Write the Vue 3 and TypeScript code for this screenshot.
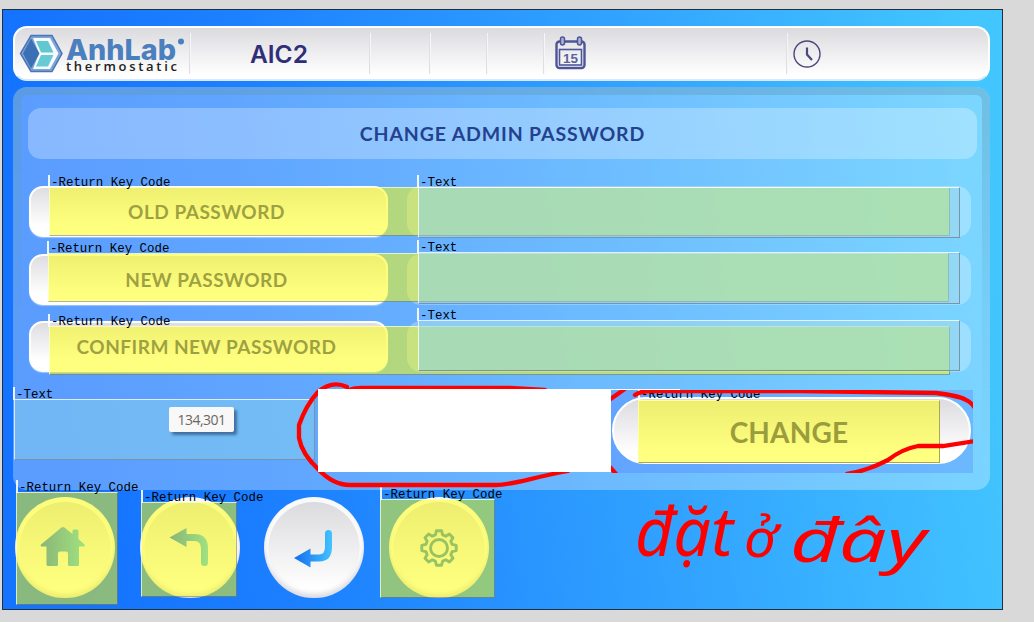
<script setup lang="ts">
interface Region {
  kind: 'key' | 'text'
  x: number
  y: number
  w: number
  h: number
  label: string
  lx: number
  ly: number
}

const rows: string[] = ['OLD PASSWORD', 'NEW PASSWORD', 'CONFIRM NEW PASSWORD']
const dividers: number[] = [189, 369, 429, 486, 543, 786]

const regions: Region[] = [
  { kind: 'key', x: 49, y: 187, w: 901, h: 49, label: 'Return Key Code', lx: 48, ly: 175 },
  { kind: 'key', x: 48, y: 253, w: 901, h: 49, label: 'Return Key Code', lx: 47, ly: 241 },
  { kind: 'key', x: 49, y: 326, w: 901, h: 49, label: 'Return Key Code', lx: 48, ly: 314 },
  { kind: 'text', x: 418, y: 187, w: 542, h: 51, label: 'Text', lx: 417, ly: 175 },
  { kind: 'text', x: 418, y: 252, w: 542, h: 52, label: 'Text', lx: 417, ly: 240 },
  { kind: 'text', x: 418, y: 320, w: 542, h: 51, label: 'Text', lx: 417, ly: 308 },
  { kind: 'text', x: 14, y: 399, w: 301, h: 61, label: 'Text', lx: 13, ly: 387 },
  { kind: 'key', x: 16, y: 492, w: 102, h: 113, label: 'Return Key Code', lx: 16, ly: 480 },
  { kind: 'key', x: 141, y: 502, w: 96, h: 95, label: 'Return Key Code', lx: 141, ly: 490 },
  { kind: 'key', x: 380, y: 499, w: 115, h: 99, label: 'Return Key Code', lx: 380, ly: 487 },
]

const px = (n: number): string => `${n}px`

const gear: string = (() => {
  const teeth = 8
  const pts: string[] = []
  for (let i = 0; i < teeth; i++) {
    const a = (i * 2 * Math.PI) / teeth - Math.PI / 2
    const steps: [number, number][] = [[-0.27, 13.6], [-0.15, 17.4], [0.15, 17.4], [0.27, 13.6]]
    for (const [da, r] of steps) {
      pts.push(`${(Math.cos(a + da) * r).toFixed(2)},${(Math.sin(a + da) * r).toFixed(2)}`)
    }
  }
  return pts.join(' ')
})()
</script>

<template>
  <div class="stage">
    <main class="screen">
      <header class="topbar">
        <svg class="brand" width="170" height="51" viewBox="15 28 170 51">
          <path d="M31 35.500h21l10 18-10 18h-21l-10.500-18z" fill="#7fa3d6" stroke="#4a75b5" stroke-width="1.500" />
          <path d="M33 38h17l8.500 15.500-8.500 15.500h-17l6-15.500z" fill="#f6fbff" />
          <path d="M31 38.500l8.500 15-8.500 15-8-15z" fill="#3c70b4" />
          <path d="M36 41h12l5.500 11.500h-12.500z" fill="#62c8cf" />
          <path d="M41 55h12.500l-5.500 11.500h-12z" fill="#66cbd4" />
          <text class="brand-name" x="66" y="60" textLength="110" lengthAdjust="spacingAndGlyphs">AnhLab</text>
          <circle cx="181" cy="41.500" r="3" fill="#4b80bf" />
          <text class="brand-sub" x="66" y="71" textLength="111">thermostatic</text>
        </svg>
        <span class="model">AIC2</span>
        <i v-for="d in dividers" :key="d" class="divider" :style="{ left: px(d - 15) }" />
        <svg class="calendar" width="34" height="36" viewBox="0 0 34 36" fill="none" stroke="#4d5596">
          <rect x="2.500" y="6.500" width="28" height="26.500" rx="3" stroke-width="2.400" />
          <rect x="5.500" y="14.500" width="22" height="15.500" stroke-width="1.600" />
          <rect x="6.500" y="2" width="4" height="8" rx="2" fill="#aeb3d2" stroke-width="1.500" />
          <rect x="23.500" y="2" width="4" height="8" rx="2" fill="#aeb3d2" stroke-width="1.500" />
          <text class="day" x="9" y="27.500" textLength="15" lengthAdjust="spacingAndGlyphs">15</text>
        </svg>
        <svg class="clock" width="30" height="30" viewBox="0 0 30 30" fill="none" stroke="#4b477f">
          <circle cx="15" cy="15" r="13" stroke-width="1.400" />
          <path d="M15 8.500v7l5 5.500" stroke-width="2.200" />
        </svg>
      </header>

      <section class="panel">
        <h1 class="title">CHANGE ADMIN PASSWORD</h1>
        <div v-for="r in rows" :key="r" class="row">
          <div class="row-label">{{ r }}</div>
          <div class="row-field" />
        </div>
      </section>

      <nav class="dock">
        <button class="round">
          <svg width="100" height="100" viewBox="15 497 100 100">
            <defs>
              <linearGradient id="ink" x1="0" x2="1"><stop offset="0" stop-color="#146cf0" /><stop offset="1" stop-color="#42c3ff" /></linearGradient>
            </defs>
            <path d="M61.500 526.500q1.500-1.200 3 0l8 6.500v-3q0-1.500 1.500-1.500h3q1.500 0 1.500 1.500v8l6 5.500q1 2-1 2h-4.500v18q0 1.500-1.500 1.500h-8q-1.500 0-1.500-1.500v-11q0-2-2-2h-6q-2 0-2 2v11q0 1.500-1.500 1.500h-8.500q-1.500 0-1.500-1.500v-18h-4.500q-2 0-1-2z" fill="url(#ink)" />
          </svg>
        </button>
        <button class="round">
          <svg width="100" height="100" viewBox="139.500 497 100 100">
            <defs>
              <linearGradient id="ink2" gradientUnits="userSpaceOnUse" x1="170" y1="0" x2="208" y2="0"><stop offset="0" stop-color="#146cf0" /><stop offset="1" stop-color="#42c3ff" /></linearGradient>
            </defs>
            <path d="M169 536.500l17-9.500v19z" fill="url(#ink2)" />
            <path d="M184 536.500h10q10 0 10 11v14" fill="none" stroke="url(#ink2)" stroke-width="7" stroke-linecap="round" />
          </svg>
        </button>
        <button class="round">
          <svg width="100" height="100" viewBox="264 497 100 100">
            <defs>
              <linearGradient id="ink3" gradientUnits="userSpaceOnUse" x1="294" y1="0" x2="332" y2="0"><stop offset="0" stop-color="#146cf0" /><stop offset="1" stop-color="#42c3ff" /></linearGradient>
            </defs>
            <path d="M294 557l16.500-9.500v19z" fill="url(#ink3)" />
            <path d="M309 557h10q9.500 0 9.500-11v-13.500" fill="none" stroke="url(#ink3)" stroke-width="7" stroke-linecap="round" />
          </svg>
        </button>
        <button class="round">
          <svg width="100" height="100" viewBox="-50 -50 100 100" fill="none" stroke="#2f86c8" stroke-width="2.900" stroke-linejoin="round">
            <polygon :points="gear" />
            <circle r="8.500" />
          </svg>
        </button>
      </nav>
    </main>

    <template v-for="(g, i) in regions" :key="i">
      <div :class="['region', g.kind]" :style="{ left: px(g.x), top: px(g.y), width: px(g.w), height: px(g.h) }" />
    </template>
    <div v-for="(g, i) in regions" :key="'l' + i" class="tag" :style="{ left: px(g.lx), top: px(g.ly) }">-{{ g.label }}</div>

    <div class="tooltip">134,301</div>

    <svg class="loop" width="1034" height="622" viewBox="0 0 1034 622">
      <path d="M347 387Q332 380 318 392Q306 405 299 425V438Q302 454 318 469Q333 485 350 485H496C512 485 530 478 568 471M350 390Q354 388 362 388H510L545 390" />
    </svg>

    <div class="blank" />
    <div class="snippet">
      <div class="snippet-pill" />
      <div class="snippet-key">CHANGE</div>
      <div class="tag snippet-tag">-Return Key Code</div>
      <svg class="snippet-ink" width="362" height="83" viewBox="611 390 362 83">
        <path d="M609 400Q618 394 626 388M609 466L616 474M635 395Q640 391 652 391H800L936 393Q960 396 966 400Q971 402 975 408M975 441L943 446H918Q902 449 888 460Q867 471 847 474" />
      </svg>
    </div>

    <svg class="note" width="310" height="150" viewBox="630 470 310 150">
      <text class="note-word large" x="635" y="556" textLength="98" lengthAdjust="spacingAndGlyphs">đặt</text>
      <text class="note-word small" x="744" y="557" textLength="32" lengthAdjust="spacingAndGlyphs">ở</text>
      <text class="note-word medium" x="790" y="562" textLength="136" lengthAdjust="spacingAndGlyphs">đây</text>
    </svg>
  </div>
</template>

<style>
html,
body {
  background: #d9d9d9;
  overflow: hidden;
}
</style>

<style scoped>
* {
  box-sizing: border-box;
}
.stage {
  position: relative;
  width: 1034px;
  height: 622px;
  padding: 9px 0 0 2px;
  background: #d9d9d9;
  font-family: Lato, "Open Sans", sans-serif;
  overflow: hidden;
}
.screen {
  width: 1001px;
  height: 601px;
  padding: 16px 12px 0 10px;
  border: 1px solid #20303f;
  background: linear-gradient(83deg, #1473ff 8%, #1c80ff 28%, #30a1ff 62%, #43c6ff 97%);
}
.topbar {
  position: relative;
  display: flex;
  align-items: center;
  height: 55px;
  border: 2px solid #fff;
  border-bottom-color: #d9e9fb;
  border-radius: 14px;
  background: linear-gradient(#dbdbdf, #fff 92%);
}
.brand {
  flex: none;
}
.brand-name {
  font: 800 28.500px Inter, sans-serif;
  fill: #4b7fbe;
}
.brand-sub {
  font: 600 13px "Open Sans", sans-serif;
  fill: #222;
}
.day {
  font: 700 13px "Liberation Sans", sans-serif;
  fill: #5b639e;
  stroke: none;
}
.model {
  margin-left: 65px;
  width: 62px;
  font: 600 24.500px Inter, sans-serif;
  color: #302e78;
  white-space: nowrap;
}
.divider {
  position: absolute;
  top: 5px;
  width: 2px;
  height: 41px;
  background: rgba(247, 247, 250, 0.9);
  border-left: 1px solid #dfdfe3;
}
.calendar {
  margin: 0 0 2px 242px;
}
.clock {
  margin-left: 204px;
}
.panel {
  height: 403px;
  margin-top: 6px;
  padding: 21px 13px 0 15px;
  border-radius: 14px;
  background: rgba(255, 255, 255, 0.3);
  position: relative;
}
.panel::before {
  content: "";
  position: absolute;
  inset: 0;
  border: 8px solid #5f9abb;
  border-bottom: 0;
  border-radius: 14px;
  opacity: 0.38;
  -webkit-mask-image: linear-gradient(#000 5%, rgba(0, 0, 0, 0.35) 55%, transparent 92%);
  mask-image: linear-gradient(#000 5%, rgba(0, 0, 0, 0.35) 55%, transparent 92%);
}
.title {
  position: relative;
  margin: 0 0 27px;
  height: 51px;
  border-radius: 13px;
  background: rgba(255, 255, 255, 0.28);
  font-size: 19.500px;
  font-weight: 700;
  line-height: 51px;
  letter-spacing: 0.850px;
  text-align: center;
  color: #24418e;
}
.row {
  position: relative;
  display: flex;
  justify-content: space-between;
  height: 51px;
  margin: 0 6px 16.500px 1px;
}
.row-label {
  width: 359px;
  border: 2px solid #fff;
  border-radius: 14px;
  background: linear-gradient(#dedee1, #fff 80%);
  box-shadow: 0 1px 1px rgba(255, 255, 255, 0.4);
  font-size: 19px;
  font-weight: 700;
  line-height: 47px;
  letter-spacing: 0.500px;
  text-align: center;
  text-indent: -4px;
  color: #3c4284;
}
.row-field {
  width: 564px;
  border-radius: 14px;
  background: rgba(255, 255, 255, 0.27);
}
.dock {
  display: flex;
  gap: 24.700px;
  padding: 7px 0 0 2px;
}
.round {
  flex: none;
  width: 100px;
  height: 101px;
  padding: 0;
  border: 0;
  border-radius: 50%;
  background: radial-gradient(circle, transparent 0 45px, rgba(255, 255, 255, 0.85) 46px), linear-gradient(#d9d9dd, #fff 90%);
  box-shadow: inset 0 -4px 5px rgba(150, 150, 170, 0.35);
}
.round svg {
  display: block;
}
.region {
  position: absolute;
  border: 1px solid;
}
.region.key {
  background: rgba(255, 255, 0, 0.5);
  background-clip: padding-box;
  border-color: rgba(255, 255, 190, 0.85) rgba(130, 130, 80, 0.6) rgba(130, 130, 80, 0.6) rgba(255, 255, 190, 0.85);
}
.region.text {
  background: rgba(135, 210, 236, 0.5);
  background-clip: padding-box;
  border-color: rgba(255, 255, 255, 0.8) #7d92a6 #7d92a6 rgba(255, 255, 255, 0.8);
}
.tag {
  position: absolute;
  height: 13px;
  padding-left: 1px;
  border-left: 2px solid rgba(255, 255, 255, 0.9);
  font: 12.450px/16px "Liberation Mono", monospace;
  color: #000;
  white-space: nowrap;
}
.tooltip {
  position: absolute;
  left: 169px;
  top: 407px;
  width: 65px;
  height: 25px;
  border-radius: 2px;
  background: #f8f8f8;
  box-shadow: 3px 3px 3px rgba(20, 50, 90, 0.55);
  font: 14px/25px "Open Sans", sans-serif;
  letter-spacing: -0.500px;
  text-align: center;
  color: #6b6763;
}
.loop,
.note {
  position: absolute;
  left: 0;
  top: 0;
}
.loop path,
.snippet-ink path {
  fill: none;
  stroke: #f00;
  stroke-width: 4.300;
  stroke-linecap: round;
}
.blank {
  position: absolute;
  left: 318px;
  top: 389px;
  width: 362px;
  height: 83px;
  background: #fff;
  clip-path: polygon(0 0, 100% 0, 100% 1px, 293px 1px, 293px 100%, 0 100%);
}
.snippet {
  position: absolute;
  left: 611px;
  top: 390px;
  width: 362px;
  height: 83px;
  overflow: hidden;
  background: linear-gradient(90deg, #62a4ff, #6cb8ff);
}
.snippet-pill {
  position: absolute;
  left: 1px;
  top: 7px;
  width: 359px;
  height: 67px;
  border: 2px solid #fff;
  border-radius: 34px;
  background: linear-gradient(#dcdce0, #fff 85%);
}
.snippet-key {
  position: absolute;
  left: 27px;
  top: 10px;
  width: 302px;
  height: 63px;
  border: 1px solid;
  border-color: #ffffa0 #a8a850 #a8a850 #ffffa0;
  background: linear-gradient(#eded70, #ffff80 85%);
  font-size: 28px;
  font-weight: 700;
  line-height: 63px;
  letter-spacing: 0.200px;
  text-align: center;
  color: #9b9d3c;
}
.snippet-tag {
  left: 27px;
  top: -3px;
}
.snippet-ink {
  position: absolute;
  left: 0;
  top: 0;
}
.note {
  left: 630px;
  top: 470px;
}
.note-word {
  font-family: "Noto Sans", "Open Sans", sans-serif;
  font-style: italic;
  fill: #f00;
}
.note-word.large {
  font-size: 68px;
}
.note-word.small {
  font-size: 52px;
}
.note-word.medium {
  font-size: 60px;
}
</style>
